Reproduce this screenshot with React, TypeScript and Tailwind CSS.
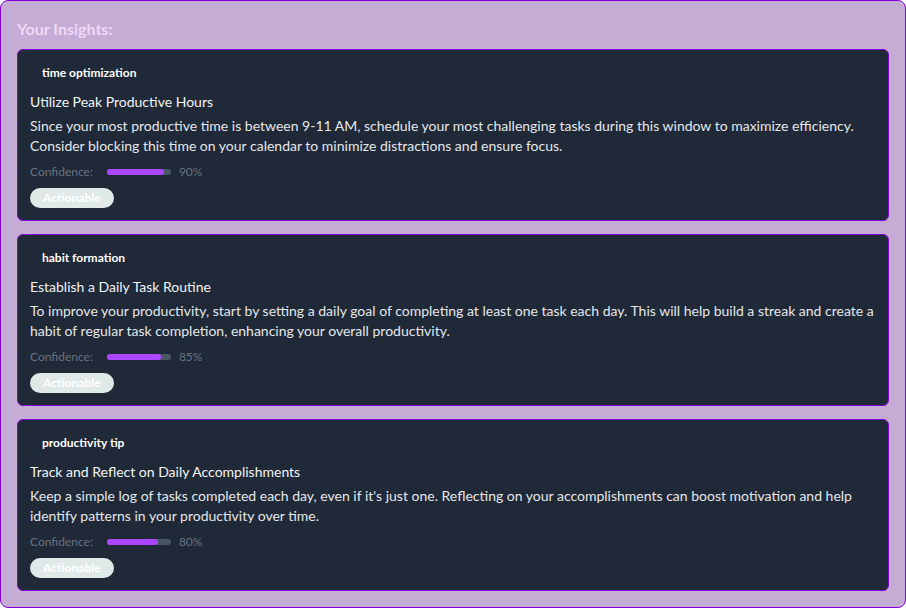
const insights = [
  {
    category: "time optimization",
    title: "Utilize Peak Productive Hours",
    description:
      "Since your most productive time is between 9-11 AM, schedule your most challenging tasks during this window to maximize efficiency. Consider blocking this time on your calendar to minimize distractions and ensure focus.",
    confidence: 90,
  },
  {
    category: "habit formation",
    title: "Establish a Daily Task Routine",
    description:
      "To improve your productivity, start by setting a daily goal of completing at least one task each day. This will help build a streak and create a habit of regular task completion, enhancing your overall productivity.",
    confidence: 85,
  },
  {
    category: "productivity tip",
    title: "Track and Reflect on Daily Accomplishments",
    description:
      "Keep a simple log of tasks completed each day, even if it's just one. Reflecting on your accomplishments can boost motivation and help identify patterns in your productivity over time.",
    confidence: 80,
  },
];

function InsightCard({ item }: { item: (typeof insights)[number] }) {
  return (
    <div className="rounded-md border border-purple-700 bg-[#1f2937] p-3">
      <span className="block w-fit rounded px-3 py-1 text-xs leading-[14px] font-bold text-white bg-[#1f2937]">
        {item.category}
      </span>
      <h3 className="mt-2 mb-1 text-sm leading-5 text-gray-100">{item.title}</h3>
      <p className="text-sm leading-5 text-gray-200">{item.description}</p>
      <div className="mt-2 flex items-center text-xs leading-4 text-gray-500">
        <span>Confidence:</span>
        <div className="ml-[14px] h-[6px] w-16 rounded-full bg-gray-600">
          <div className="h-full rounded-full bg-purple-500" style={{ width: `${item.confidence}%` }} />
        </div>
        <span className="ml-2">{item.confidence}%</span>
      </div>
      <span className="mt-2 flex h-5 w-fit items-center rounded-full bg-[#dfe9e8] px-[13px] text-xs font-bold text-white">
        Actionable
      </span>
    </div>
  );
}

export default function App() {
  return (
    <div className="rounded-lg border border-purple-700 bg-[#c4acd4] p-4 font-['Lato',sans-serif]">
      <h2 className="mb-2 text-base leading-6 font-bold text-[#f1d6f5]">Your Insights:</h2>
      <div className="flex flex-col gap-[13px]">
        {insights.map((item) => (
          <InsightCard key={item.title} item={item} />
        ))}
      </div>
    </div>
  );
}
